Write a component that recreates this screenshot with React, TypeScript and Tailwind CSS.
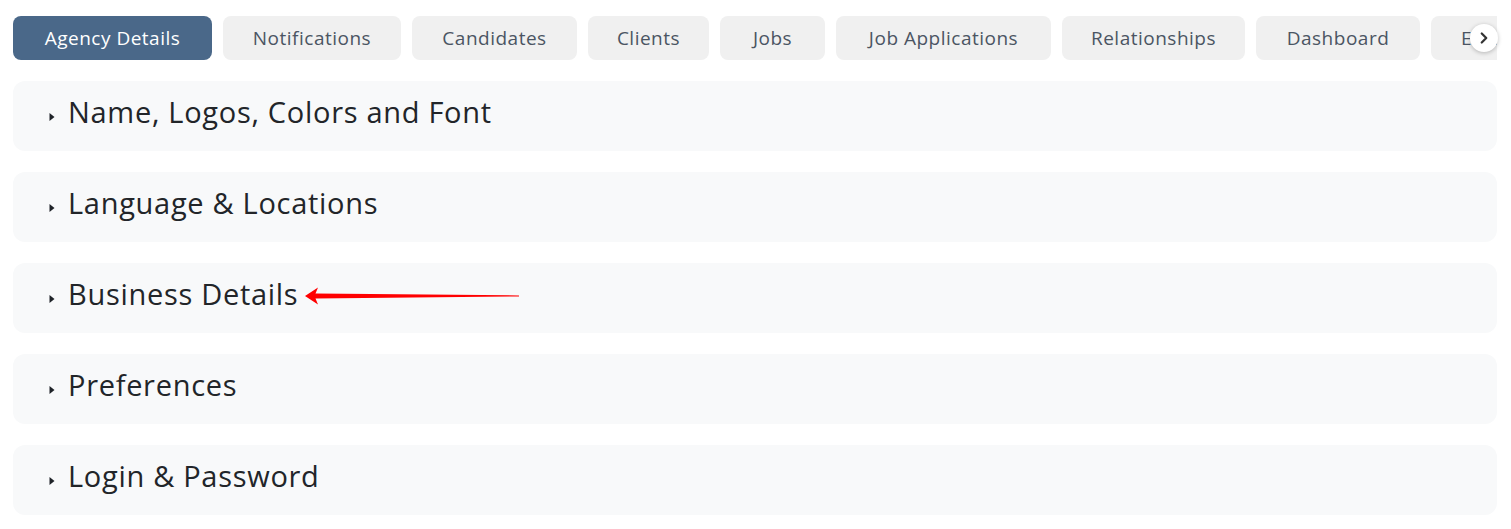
import { ChevronRight } from "lucide-react";

const tabs = [
    { label: "Agency Details", w: "w-[199px]" },
    { label: "Notifications", w: "w-[178px]" },
    { label: "Candidates", w: "w-[165px]" },
    { label: "Clients", w: "w-[121px]" },
    { label: "Jobs", w: "w-[105px]" },
    { label: "Job Applications", w: "w-[215px]" },
    { label: "Relationships", w: "w-[183px]" },
    { label: "Dashboard", w: "w-[164px]" },
    { label: "Email Templates", w: "w-[190px]" },
];

const sections = ["Name, Logos, Colors and Font", "Language & Locations", "Business Details", "Preferences", "Login & Password"];

function Caret() {
    return (
        <svg width="6" height="10" viewBox="0 0 6 10" className="shrink-0 mt-[2px]">
            <path d="M0.5 1 L5.5 5 L0.5 9 Z" fill="#1f2328" />
        </svg>
    );
}

function Arrow() {
    return (
        <svg width="220" height="20" viewBox="0 0 220 20" className="absolute left-[290px] top-[23px]">
            <path d="M2 10 L15 1.5 L12.5 7.5 L216 9.4 L216 10.4 L12.5 12.5 L15 18.5 Z" fill="#ff0000" />
        </svg>
    );
}

export default function App() {
    return (
        <div className="w-[1511px] h-[529px] bg-white font-['Open_Sans',sans-serif] overflow-hidden">
            <div className="relative mx-[13px] pt-4">
                <div className="flex gap-[11px] overflow-hidden w-[1484px]">
                    {tabs.map((t, i) => (
                        <div
                            key={t.label}
                            className={`${t.w} shrink-0 h-[44px] rounded-lg flex items-center text-[19px] tracking-[0.5px] overflow-hidden whitespace-nowrap ${
                                i === 0 ? "bg-[#4a6889] text-white" : "bg-[#f0f0f0] text-[#4b5563]"
                            } ${i === tabs.length - 1 ? "justify-start pl-[30px]" : "justify-center"}`}
                        >
                            {t.label}
                        </div>
                    ))}
                </div>
                <button className="absolute right-[0px] top-[24px] w-[28px] h-[28px] rounded-full bg-white shadow-[0_1px_4px_rgba(0,0,0,0.25)] flex items-center justify-center text-[#333]">
                    <ChevronRight size={18} strokeWidth={3} />
                </button>
            </div>
            <div className="mx-[13px] mt-[21px] flex flex-col gap-[21px] w-[1484px]">
                {sections.map((s) => (
                    <div key={s} className="relative h-[70px] rounded-xl bg-[#f8f9fa] flex items-center pl-[36px] gap-[13px]">
                        <Caret />
                        <span className="text-[29px] tracking-[0.7px] text-[#222529] -mt-[8px]">{s}</span>
                        {s === "Business Details" && <Arrow />}
                    </div>
                ))}
            </div>
        </div>
    );
}
